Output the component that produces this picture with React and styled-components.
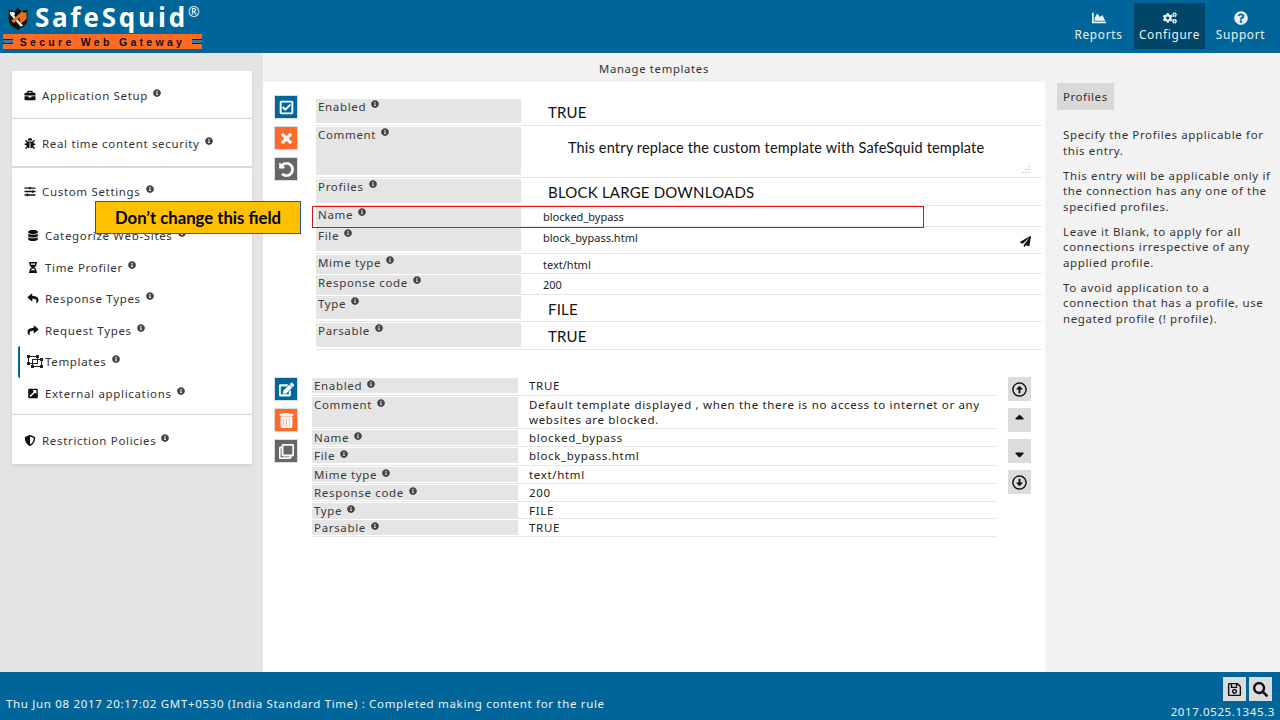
import React from "react";
import styled, { createGlobalStyle } from "styled-components";
import {
  FaBriefcase,
  FaBug,
  FaSlidersH,
  FaDatabase,
  FaHourglassHalf,
  FaReply,
  FaShare,
  FaExternalLinkSquareAlt,
  FaShieldAlt,
  FaInfoCircle,
  FaRegCheckSquare,
  FaTimes,
  FaUndoAlt,
  FaEdit,
  FaTrashAlt,
  FaRegClone,
  FaRegArrowAltCircleUp,
  FaRegArrowAltCircleDown,
  FaSortUp,
  FaSortDown,
  FaRegSave,
  FaSearch,
  FaPaperPlane,
  FaChartArea,
  FaCogs,
  FaQuestionCircle,
} from "react-icons/fa";

const GlobalStyle = createGlobalStyle`
  html, body {
    margin: 0;
    padding: 0;
    overflow: hidden;
  }
  body {
    font-family: "Noto Sans", "Open Sans", sans-serif;
    font-size: 11.5px;
    letter-spacing: 0.67px;
    color: #333;
  }
`;

const St = {
  Page: styled.div`
    position: relative;
    display: flex;
    flex-direction: column;
    width: 1280px;
    height: 720px;
    overflow: hidden;
  `,
  Header: styled.header`
    display: flex;
    justify-content: space-between;
    height: 53px;
    background-color: #006699;
    flex-shrink: 0;
  `,
  Logo: styled.div`
    display: flex;
    flex-direction: column;
    width: 199px;
    margin-left: 3px;
    padding-top: 3px;
  `,
  LogoTop: styled.div`
    display: flex;
    align-items: flex-start;
    height: 31px;
    padding-left: 3px;
    svg {
      margin-top: 4px;
      flex-shrink: 0;
    }
  `,
  LogoName: styled.span`
    margin-left: 5px;
    font-family: "Open Sans", sans-serif;
    font-size: 26px;
    line-height: 29px;
    font-weight: 700;
    letter-spacing: 2.8px;
    color: #fff;
    white-space: nowrap;
  `,
  LogoMark: styled.sup`
    font-size: 14px;
    font-weight: 400;
    letter-spacing: 0;
    line-height: 12px;
    vertical-align: 10px;
  `,
  Tagline: styled.div`
    display: flex;
    align-items: center;
    justify-content: space-between;
    height: 15px;
    background-color: #ff6a21;
  `,
  TaglineText: styled.span`
    font-family: "Liberation Sans", sans-serif;
    font-size: 10.5px;
    font-weight: 700;
    letter-spacing: 3.3px;
    color: #111;
    white-space: nowrap;
  `,
  Notch: styled.span`
    display: block;
    width: 10px;
    height: 5px;
    background-color: #2e7ea6;
    border-top: 1px solid #123;
    border-bottom: 1px solid #123;
    box-sizing: border-box;
  `,
  Nav: styled.nav`
    display: flex;
    align-items: flex-start;
    padding: 3px 4px 0 0;
  `,
  NavItem: styled.a`
    display: flex;
    flex-direction: column;
    align-items: center;
    justify-content: center;
    width: 71px;
    height: 46px;
    color: #e8f2f7;
    font-size: 11.8px;
    letter-spacing: 0.7px;
    line-height: 16px;
    background-color: ${({ $active }) => ($active ? "#004669" : "transparent")};
    svg {
      font-size: 14px;
      margin-bottom: 1px;
    }
  `,
  Body: styled.div`
    display: flex;
    flex: 1;
    min-height: 0;
  `,
  Sidebar: styled.aside`
    width: 263px;
    flex-shrink: 0;
    box-sizing: border-box;
    padding: 18px 11px 0 12px;
    background-color: #e4e4e4;
  `,
  Card: styled.div`
    display: flex;
    align-items: center;
    box-sizing: border-box;
    height: ${({ $height }) => $height};
    padding: ${({ $top }) => $top || "1px"} 0 0 12px;
    background-color: #fff;
    margin-bottom: ${({ $gap }) => $gap || "0"};
    box-shadow: 0 2px 3px rgba(0, 0, 0, 0.07);
    svg.main {
      width: 12px;
      font-size: 11px;
      color: #111;
      margin-right: 6px;
      flex-shrink: 0;
    }
  `,
  SubMenu: styled.div`
    display: flex;
    flex-direction: column;
    height: 200px;
    padding-top: 6px;
    box-sizing: border-box;
    background-color: #fff;
    margin-bottom: 1px;
    box-shadow: 0 2px 3px rgba(0, 0, 0, 0.07);
  `,
  SubItem: styled.div`
    display: flex;
    align-items: center;
    height: 31.5px;
    margin-left: 6px;
    padding-left: 7px;
    border-left: 2px solid ${({ $active }) => ($active ? "#006699" : "transparent")};
    border-radius: 2px;
    svg.main {
      width: 12px;
      font-size: 11px;
      color: #111;
      margin-right: 6px;
      flex-shrink: 0;
    }
    svg.wide {
      width: 16px;
      flex-shrink: 0;
      margin-right: 2px;
    }
  `,
  Info: styled(FaInfoCircle)`
    font-size: 8px;
    color: #444;
    margin: -5px 0 0 5px;
    flex-shrink: 0;
  `,
  Main: styled.main`
    display: flex;
    flex-direction: column;
    flex: 1;
    min-width: 0;
    background-color: #fff;
  `,
  Title: styled.div`
    height: 29px;
    line-height: 31px;
    text-align: center;
    background-color: #f2f2f2;
    font-size: 11.3px;
    flex-shrink: 0;
  `,
  Entry: styled.section`
    display: flex;
    padding: ${({ $padding }) => $padding};
  `,
  Actions: styled.div`
    display: flex;
    flex-direction: column;
    gap: 7px;
    flex-shrink: 0;
  `,
  Action: styled.button`
    display: flex;
    align-items: center;
    justify-content: center;
    width: 24px;
    height: 24px;
    padding: 0;
    border: 1px solid #ddd;
    color: #fff;
    background-color: ${({ $bg }) => $bg};
    font-size: 15px;
    svg {
      stroke: currentColor;
      stroke-width: 16;
    }
  `,
  Table: styled.div`
    margin-left: ${({ $left }) => $left};
    margin-top: ${({ $top }) => $top || "0"};
    width: ${({ $width }) => $width};
    flex-shrink: 0;
  `,
  Row: styled.div`
    display: grid;
    grid-template-columns: ${({ $label }) => $label} 1fr;
    box-sizing: border-box;
    height: ${({ $height }) => $height};
    padding: 1px 0 2px;
    border-bottom: 1px solid #e6e6e6;
  `,
  Label: styled.div`
    display: flex;
    align-items: flex-start;
    padding-left: 2px;
    line-height: ${({ $line }) => $line};
    background-color: #e5e5e5;
    color: #3a3a3a;
    svg {
      margin-top: ${({ $infoTop }) => $infoTop};
    }
  `,
  Value: styled.div`
    padding-left: 11px;
    line-height: ${({ $line }) => $line};
    color: #222;
  `,
  PlainValue: styled.div`
    display: flex;
    align-items: center;
    justify-content: space-between;
    padding: 0 11px 0 22px;
    height: 19px;
    font-size: 11px;
    letter-spacing: 0;
    color: #222;
    svg {
      font-size: 11px;
      color: #111;
      margin-top: 7px;
    }
  `,
  TypedValue: styled.div`
    padding-top: 3px;
    padding-left: 27px;
    font-family: Lato, sans-serif;
    font-size: 15px;
    line-height: 20px;
    letter-spacing: 0.2px;
    color: #111;
  `,
  CommentValue: styled.div`
    position: relative;
    padding-top: 11px;
    padding-left: 47px;
    font-family: Lato, sans-serif;
    font-size: 14.5px;
    line-height: 20px;
    letter-spacing: 0.17px;
    color: #111;
  `,
  Resizer: styled.svg`
    position: absolute;
    right: 12px;
    bottom: 1px;
  `,
  Moves: styled.div`
    display: flex;
    flex-direction: column;
    gap: 7px;
    margin-left: 11px;
  `,
  Move: styled.button`
    display: flex;
    align-items: center;
    justify-content: center;
    width: 23px;
    height: 24px;
    padding: 0;
    border: 0;
    color: #111;
    background-color: #dcdcdc;
    font-size: 15px;
  `,
  Help: styled.aside`
    width: 235px;
    flex-shrink: 0;
    box-sizing: border-box;
    padding: 30px 6px 0 12px;
    background-color: #f2f2f2;
  `,
  HelpTab: styled.div`
    display: inline-block;
    height: 27px;
    line-height: 28px;
    padding: 0 6px;
    background-color: #d9d9d9;
    font-size: 11.5px;
    letter-spacing: 0.55px;
  `,
  HelpText: styled.p`
    margin: 0 0 9.5px 6px;
    line-height: 15.5px;
    font-size: 11.5px;
    letter-spacing: 0.62px;
    color: #333;
    &:first-of-type {
      margin-top: 17px;
    }
  `,
  Footer: styled.footer`
    display: flex;
    justify-content: space-between;
    height: 48px;
    flex-shrink: 0;
    background-color: #006699;
    color: #e8f2f7;
  `,
  Status: styled.div`
    padding: 24px 0 0 6px;
    line-height: 16px;
  `,
  FooterRight: styled.div`
    display: flex;
    flex-direction: column;
    align-items: flex-end;
    padding: 5px 8px 0 0;
  `,
  FooterButtons: styled.div`
    display: flex;
    gap: 3px;
  `,
  FooterButton: styled.button`
    display: flex;
    align-items: center;
    justify-content: center;
    width: 23px;
    height: 24px;
    padding: 0;
    border: 0;
    font-size: 15px;
    color: #111;
    background-color: #dcdcdc;
  `,
  Version: styled.div`
    margin: 3px -3px 0 0;
    line-height: 15px;
    font-size: 11.5px;
    letter-spacing: 0.6px;
  `,
  RedBox: styled.div`
    position: absolute;
    left: 312px;
    top: 206px;
    width: 612px;
    height: 22px;
    box-sizing: border-box;
    border: 1px solid #e01010;
  `,
  Callout: styled.div`
    position: absolute;
    left: 95px;
    top: 201px;
    display: flex;
    align-items: center;
    justify-content: center;
    box-sizing: border-box;
    width: 206px;
    height: 33px;
    border: 1px solid #2f5597;
    background-color: #ffc000;
    font-family: Lato, sans-serif;
    font-size: 16.7px;
    font-weight: 700;
    letter-spacing: 0;
    color: #000;
  `,
};

const ShieldLogo = () => (
  <svg width="24" height="23" viewBox="0 0 24 27">
    <path d="M1 3 L8 5 L12 1 L16 5 L23 3 L23 15 C23 21 17 24 12 27 C7 24 1 21 1 15 Z" fill="#111" />
    <path d="M13 9 L22 6 L22 14 L15 20 Z" fill="#e8701f" />
    <path d="M3 5 L18 22 L15 23 L2 8 Z" fill="#f2f2f2" />
    <path d="M4 16 L17 5 L19 7 L7 19 Z" fill="#e8701f" />
    <circle cx="6" cy="8" r="2.4" fill="#f2f2f2" />
  </svg>
);

const TemplatesIcon = () => (
  <svg className="wide" width="16" height="13" viewBox="0 0 16 13" fill="none" stroke="#222" strokeWidth="1">
    <rect x="1.5" y="1.5" width="9" height="7" />
    <rect x="5.5" y="4.5" width="9" height="7" />
    <path d="M0 0h3v3H0zM9 0h3v3H9zM0 7h3v3H0zM13 3h3v3h-3zM4 10h3v3H4zM13 10h3v3h-3z" fill="#222" stroke="none" />
  </svg>
);

const sidebarSub = [
  { icon: <FaDatabase className="main" />, text: "Categorize Web-Sites" },
  { icon: <FaHourglassHalf className="main" />, text: "Time Profiler" },
  { icon: <FaReply className="main" />, text: "Response Types" },
  { icon: <FaShare className="main" />, text: "Request Types" },
  { icon: <TemplatesIcon />, text: "Templates", active: true },
  { icon: <FaExternalLinkSquareAlt className="main" />, text: "External applications" },
];

const savedRows = [
  { label: "Enabled", value: "TRUE", height: "19px" },
  {
    label: "Comment",
    value:
      "Default template displayed , when the there is no access to internet or any websites are blocked.",
    height: "33px",
    line: "15px",
  },
  { label: "Name", value: "blocked_bypass", height: "18px" },
  { label: "File", value: "block_bypass.html", height: "19px" },
  { label: "Mime type", value: "text/html", height: "18px" },
  { label: "Response code", value: "200", height: "18px" },
  { label: "Type", value: "FILE", height: "17px" },
  { label: "Parsable", value: "TRUE", height: "18px" },
];

const FormRow = ({ label, height, children }) => (
  <St.Row $label="205px" $height={height}>
    <St.Label $line="16px" $infoTop="1px">
      {label}
      <St.Info />
    </St.Label>
    {children}
  </St.Row>
);

const App = () => {
  return (
    <St.Page>
      <GlobalStyle />
      <St.Header>
        <St.Logo>
          <St.LogoTop>
            <ShieldLogo />
            <St.LogoName>
              SafeSquid<St.LogoMark>®</St.LogoMark>
            </St.LogoName>
          </St.LogoTop>
          <St.Tagline>
            <St.Notch />
            <St.TaglineText>Secure Web Gateway</St.TaglineText>
            <St.Notch />
          </St.Tagline>
        </St.Logo>
        <St.Nav>
          <St.NavItem>
            <FaChartArea />
            Reports
          </St.NavItem>
          <St.NavItem $active>
            <FaCogs />
            Configure
          </St.NavItem>
          <St.NavItem>
            <FaQuestionCircle />
            Support
          </St.NavItem>
        </St.Nav>
      </St.Header>

      <St.Body>
        <St.Sidebar>
          <St.Card $height="47px" $gap="1px">
            <FaBriefcase className="main" />
            Application Setup
            <St.Info />
          </St.Card>
          <St.Card $height="47px" $gap="2px">
            <FaBug className="main" />
            Real time content security
            <St.Info />
          </St.Card>
          <St.Card $height="46px" $top="0px">
            <FaSlidersH className="main" />
            Custom Settings
            <St.Info />
          </St.Card>
          <St.SubMenu>
            {sidebarSub.map(({ icon, text, active }) => (
              <St.SubItem key={text} $active={active}>
                {icon}
                {text}
                <St.Info />
              </St.SubItem>
            ))}
          </St.SubMenu>
          <St.Card $height="49px">
            <FaShieldAlt className="main" />
            Restriction Policies
            <St.Info />
          </St.Card>
        </St.Sidebar>

        <St.Main>
          <St.Title>Manage templates</St.Title>
          <St.Entry $padding="13px 0 0 11px">
            <St.Actions>
              <St.Action $bg="#006699">
                <FaRegCheckSquare />
              </St.Action>
              <St.Action $bg="#ff6a2b">
                <FaTimes />
              </St.Action>
              <St.Action $bg="#666">
                <FaUndoAlt />
              </St.Action>
            </St.Actions>
            <St.Table $left="18px" $top="3px" $width="726px">
              <FormRow label="Enabled" height="28px">
                <St.TypedValue>TRUE</St.TypedValue>
              </FormRow>
              <FormRow label="Comment" height="52px">
                <St.CommentValue>
                  This entry replace the custom template with SafeSquid template
                  <St.Resizer width="9" height="9" viewBox="0 0 9 9">
                    <path d="M8 1v1M5 4v1M8 4v1M2 7v1M5 7v1M8 7v1" stroke="#999" />
                  </St.Resizer>
                </St.CommentValue>
              </FormRow>
              <FormRow label="Profiles" height="28px">
                <St.TypedValue>BLOCK LARGE DOWNLOADS</St.TypedValue>
              </FormRow>
              <FormRow label="Name" height="21px">
                <St.PlainValue>blocked_bypass</St.PlainValue>
              </FormRow>
              <FormRow label="File" height="27px">
                <St.PlainValue>
                  block_bypass.html
                  <FaPaperPlane />
                </St.PlainValue>
              </FormRow>
              <FormRow label="Mime type" height="20px">
                <St.PlainValue>text/html</St.PlainValue>
              </FormRow>
              <FormRow label="Response code" height="21px">
                <St.PlainValue>200</St.PlainValue>
              </FormRow>
              <FormRow label="Type" height="27px">
                <St.TypedValue>FILE</St.TypedValue>
              </FormRow>
              <FormRow label="Parsable" height="28px">
                <St.TypedValue>TRUE</St.TypedValue>
              </FormRow>
            </St.Table>
          </St.Entry>

          <St.Entry $padding="27px 0 0 11px">
            <St.Actions>
              <St.Action $bg="#006699">
                <FaEdit />
              </St.Action>
              <St.Action $bg="#ff6a2b">
                <FaTrashAlt />
              </St.Action>
              <St.Action $bg="#666">
                <FaRegClone />
              </St.Action>
            </St.Actions>
            <St.Table $left="14px" $width="685px">
              {savedRows.map(({ label, value, height, line }) => (
                <St.Row key={label} $label="206px" $height={height}>
                  <St.Label $line="15px" $infoTop="2px">
                    {label}
                    <St.Info />
                  </St.Label>
                  <St.Value $line={line || "15px"}>{value}</St.Value>
                </St.Row>
              ))}
            </St.Table>
            <St.Moves>
              <St.Move>
                <FaRegArrowAltCircleUp />
              </St.Move>
              <St.Move>
                <FaSortUp />
              </St.Move>
              <St.Move>
                <FaSortDown />
              </St.Move>
              <St.Move>
                <FaRegArrowAltCircleDown />
              </St.Move>
            </St.Moves>
          </St.Entry>
        </St.Main>

        <St.Help>
          <St.HelpTab>Profiles</St.HelpTab>
          <St.HelpText>Specify the Profiles applicable for this entry.</St.HelpText>
          <St.HelpText>
            This entry will be applicable only if the connection has any one of the specified
            profiles.
          </St.HelpText>
          <St.HelpText>
            Leave it Blank, to apply for all connections irrespective of any applied profile.
          </St.HelpText>
          <St.HelpText>
            To avoid application to a connection that has a profile, use negated profile (! profile).
          </St.HelpText>
        </St.Help>
      </St.Body>

      <St.Footer>
        <St.Status>
          Thu Jun 08 2017 20:17:02 GMT+0530 (India Standard Time) : Completed making content for the
          rule
        </St.Status>
        <St.FooterRight>
          <St.FooterButtons>
            <St.FooterButton>
              <FaRegSave />
            </St.FooterButton>
            <St.FooterButton>
              <FaSearch />
            </St.FooterButton>
          </St.FooterButtons>
          <St.Version>2017.0525.1345.3</St.Version>
        </St.FooterRight>
      </St.Footer>

      <St.RedBox />
      <St.Callout>Don’t change this field</St.Callout>
    </St.Page>
  );
};

export default App;
